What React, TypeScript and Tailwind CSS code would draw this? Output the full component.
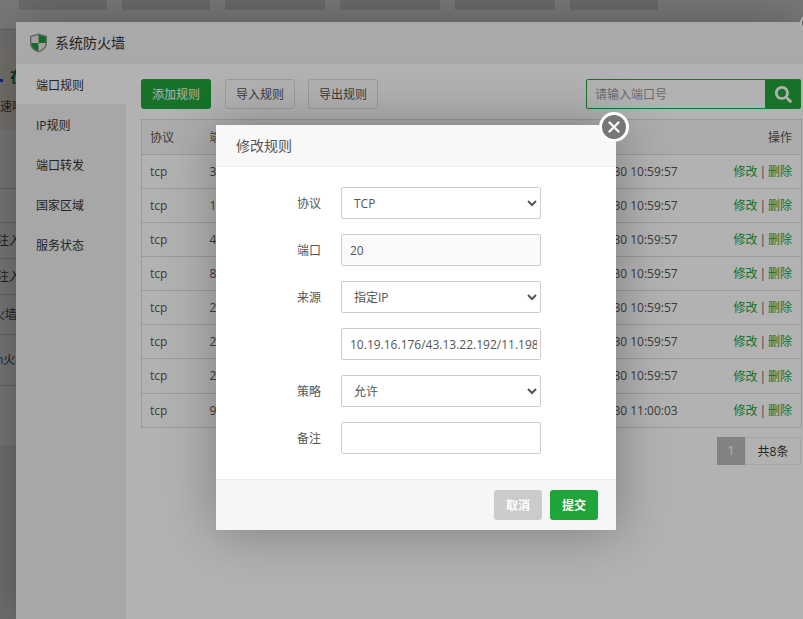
import type { ReactElement } from 'react';
import { FaSearch } from 'react-icons/fa';

const font = { fontFamily: '"Open Sans", "Noto Sans CJK SC", sans-serif' };

const topTabs = [
  { w: 'w-[88px]', label: '系统设置' },
  { w: 'w-[88px]', label: '文件管理' },
  { w: 'w-[100px]', label: '安全设置' },
  { w: 'w-[100px]', label: '防火墙设置' },
  { w: 'w-[100px]', label: '安全扫描日志' },
  { w: 'w-[88px]', label: '面板' },
];

const navItems = ['端口规则', 'IP规则', '端口转发', '国家区域', '服务状态'];

const rules = [
  { port: '3306', time: '2022-09-30 10:59:57', rowClass: 'h-[34px]' },
  { port: '12', time: '2022-09-30 10:59:57', rowClass: 'h-[34px]' },
  { port: '443', time: '2022-09-30 10:59:57', rowClass: 'h-[34px]' },
  { port: '80', time: '2022-09-30 10:59:57', rowClass: 'h-[34px]' },
  { port: '22', time: '2022-09-30 10:59:57', rowClass: 'h-[34px]' },
  { port: '21', time: '2022-09-30 10:59:57', rowClass: 'h-[34px]' },
  { port: '20', time: '2022-09-30 10:59:57', rowClass: 'h-[35px]' },
  { port: '9000', time: '2022-09-30 11:00:03', rowClass: 'h-[34px]' },
];

function ShieldIcon(): ReactElement {
  return (
    <svg width="19" height="20" viewBox="0 0 19 20">
      <path d="M9.5 0.5 L18 3 V10 C18 15 14 18 9.5 19.5 C5 18 1 15 1 10 V3 Z" fill="#8f8f8f" />
      <path d="M9.5 2 L16.6 4.1 V10 H9.5 Z" fill="#1f9a36" />
      <path d="M9.5 2 L2.4 4.1 V10 H9.5 Z" fill="#e6e6e6" />
      <path d="M9.5 10 H2.4 C2.6 14 5.6 16.6 9.5 18 Z" fill="#1f9a36" />
      <path d="M9.5 10 H16.6 C16.4 14 13.4 16.6 9.5 18 Z" fill="#e6e6e6" />
    </svg>
  );
}

// the page that sits behind both layers, only a sliver of it is visible
function BackgroundPage(): ReactElement {
  return (
    <div className="h-[619px] bg-[#e2e2e2] text-xs text-[#444]">
      <div className="flex h-[30px] gap-[15px] border-b border-[#c8c8c8] bg-[#fafafa] pl-[19px]">
        {topTabs.map((tab) => (
          <div key={tab.label} className={`${tab.w} h-[10px] overflow-hidden bg-[#dcdcdc]`}>
            <div className="-mt-[15px] text-center text-xs leading-[16px] text-[#222]">{tab.label}</div>
          </div>
        ))}
      </div>
      <div className="mt-[16px] h-[84px] w-full bg-[#f0eadf] pt-[20px]">
        <div className="flex items-end">
          <span className="mb-[4px] h-[3px] w-[3px] bg-blue-600" />
          <span className="ml-[7px] text-[15px] font-bold text-green-700">在</span>
        </div>
        <div className="mt-[13px] whitespace-nowrap">速啊</div>
      </div>
      <div className="h-[315px] bg-[#f2f2f2]">
        <div className="h-[59px] border-b border-[#ccc]" />
        <div className="h-[34px] border-b border-[#ccc]" />
        <div className="-ml-[3px] flex h-[36px] items-center border-b border-[#ccc] whitespace-nowrap">注入</div>
        <div className="-ml-[3px] flex h-[36px] items-center border-b border-[#ccc] whitespace-nowrap">注入</div>
        <div className="-ml-[7px] flex h-[40px] items-center border-b border-[#ccc] whitespace-nowrap">火墙</div>
        <div className="-ml-[4px] flex h-[51px] items-center border-b border-[#ccc] whitespace-nowrap">
          <span className="text-blue-700">n</span>火墙
        </div>
      </div>
    </div>
  );
}

function FirewallLayer(): ReactElement {
  return (
    <div className="absolute top-[22px] left-[16px] h-[597px] w-[787px] bg-white text-xs text-[#555] shadow-[1px_1px_50px_rgba(0,0,0,0.3)]">
      <div className="flex h-[42px] items-center gap-[7px] border-b border-[#eee] bg-[#f3f3f3] pl-[13px] text-sm text-[#333]">
        <ShieldIcon />
        <span>系统防火墙</span>
      </div>
      <div className="flex h-[555px]">
        <div className="w-[110px] bg-[#f0f0f0] text-[#333]">
          {navItems.map((item, i) => (
            <div
              key={item}
              className={`flex h-[40px] items-center pt-[3px] pl-[20px] ${i === 0 ? 'bg-white' : ''}`}
            >
              {item}
            </div>
          ))}
        </div>
        <div className="w-[675px] pt-[15px] pl-[15px]">
          <div className="flex h-[30px] items-center justify-between">
            <div className="flex">
              <button className="h-[30px] w-[70px] rounded-[3px] bg-[#20a53a] pt-[2px] text-white">添加规则</button>
              <button className="ml-[14px] h-[30px] w-[70px] rounded-[3px] border border-[#ddd] pt-[2px] text-[#555]">导入规则</button>
              <button className="ml-[13px] h-[30px] w-[70px] rounded-[3px] border border-[#ddd] pt-[2px] text-[#555]">导出规则</button>
            </div>
            <div className="flex h-[30px] w-[215px]">
              <input
                className="h-[30px] w-[180px] rounded-l-[2px] border border-[#20a53a] pt-[1px] pl-[8px] outline-none placeholder:text-[#999]"
                placeholder="请输入端口号"
              />
              <div className="flex h-[30px] w-[35px] items-center justify-center rounded-r-[2px] bg-[#20a53a] text-white">
                <FaSearch size={17} />
              </div>
            </div>
          </div>
          <table className="mt-[10px] w-[660px] table-fixed border-collapse border border-[#ddd]">
            <colgroup>
              <col className="w-[60px]" />
              <col className="w-[150px]" />
              <col className="w-[213px]" />
              <col className="w-[122px]" />
              <col className="w-[115px]" />
            </colgroup>
            <thead>
              <tr className="h-[35px] border-b border-[#ddd] bg-[#f6f6f6]">
                <th className="pt-[2px] pl-[8px] text-left font-normal">协议</th>
                <th className="pt-[2px] pl-[8px] text-left font-normal">端口</th>
                <th className="pt-[2px] text-left font-normal">策略</th>
                <th className="pt-[2px] text-left font-normal">时间</th>
                <th className="pt-[2px] pr-[9px] text-right font-normal">操作</th>
              </tr>
            </thead>
            <tbody>
              {rules.map((r, i) => (
                <tr key={i} className={`${r.rowClass} border-b border-[#ddd]`}>
                  <td className="pl-[8px]">tcp</td>
                  <td className="pl-[8px]">{r.port}</td>
                  <td>允许</td>
                  <td className="whitespace-nowrap">{r.time}</td>
                  <td className="pt-[1px] pr-[9px] text-right">
                    <span className="text-[#20a53a]">修改</span>
                    <span className="mx-[2px]">|</span>
                    <span className="text-[#20a53a]">删除</span>
                  </td>
                </tr>
              ))}
            </tbody>
          </table>
          <div className="mt-[9px] flex w-[660px] justify-end">
            <div className="flex h-[28px] w-[28px] items-center justify-center bg-[#bbb] text-white">1</div>
            <div className="flex h-[28px] w-[56px] items-center justify-center border border-[#eee] pt-[1px] text-[#333]">共8条</div>
          </div>
        </div>
      </div>
    </div>
  );
}

function Field({ label, children }: { label: string; children: ReactElement }): ReactElement {
  return (
    <div className="flex h-[32px] items-center">
      <label className="mr-[20px] w-[105px] pt-[2px] text-right">{label}</label>
      {children}
    </div>
  );
}

const fieldClass = 'h-[32px] w-[200px] rounded-[2px] border border-[#ccc] pl-[8px] text-[#555] outline-none';

function EditModal(): ReactElement {
  return (
    <div className="absolute top-[125px] left-[216px] w-[400px] bg-white text-xs text-[#555] shadow-[1px_1px_50px_rgba(0,0,0,0.3)]">
      <div className="flex h-[42px] items-center border-b border-[#eee] bg-[#f8f8f8] pl-[20px] text-sm text-[#555]">
        修改规则
      </div>
      <div className="flex h-[312px] flex-col gap-[15px] pt-[20px]">
        <Field label="协议">
          <select className={`${fieldClass} bg-white`} defaultValue="TCP">
            <option>TCP</option>
            <option>UDP</option>
          </select>
        </Field>
        <Field label="端口">
          <input className={`${fieldClass} bg-[#fafafa]`} defaultValue="20" readOnly />
        </Field>
        <Field label="来源">
          <select className={`${fieldClass} bg-white`} defaultValue="指定IP">
            <option>所有IP</option>
            <option>指定IP</option>
          </select>
        </Field>
        <Field label="">
          <input className={`${fieldClass} bg-white pr-[3px]`} defaultValue="10.19.16.176/43.13.22.192/11.198.0.1" />
        </Field>
        <Field label="策略">
          <select className={`${fieldClass} bg-white`} defaultValue="允许">
            <option>允许</option>
            <option>拒绝</option>
          </select>
        </Field>
        <Field label="备注">
          <input className={`${fieldClass} bg-white`} />
        </Field>
      </div>
      <div className="flex h-[51px] items-center justify-end border-t border-[#eee] bg-[#f5f6f6] pr-[18px]">
        <button className="mr-[8px] h-[30px] w-[48px] rounded-[3px] bg-[#cbcbcb] pt-[1px] font-bold text-white">取消</button>
        <button className="h-[30px] w-[48px] rounded-[3px] bg-[#20a53a] pt-[1px] font-bold text-white">提交</button>
      </div>
      <div className="absolute -top-[13px] -right-[13px] flex h-[30px] w-[30px] items-center justify-center rounded-full border-[3px] border-white bg-[#777]">
        <svg width="14" height="14" viewBox="0 0 14 14" fill="none" stroke="white" strokeWidth="2.4" strokeLinecap="round">
          <path d="M2.5 2.5 L11.5 11.5 M11.5 2.5 L2.5 11.5" />
        </svg>
      </div>
    </div>
  );
}

export default function App(): ReactElement {
  return (
    <div className="relative h-[619px] w-[803px] overflow-hidden" style={font}>
      <BackgroundPage />
      <div className="absolute inset-0 bg-black/30" />
      <FirewallLayer />
      <div className="absolute top-[15px] -right-[13px] h-[16px] w-[16px] rounded-full border-2 border-white bg-[#777]" />
      <div className="absolute inset-0 bg-black/30" />
      <EditModal />
    </div>
  );
}
